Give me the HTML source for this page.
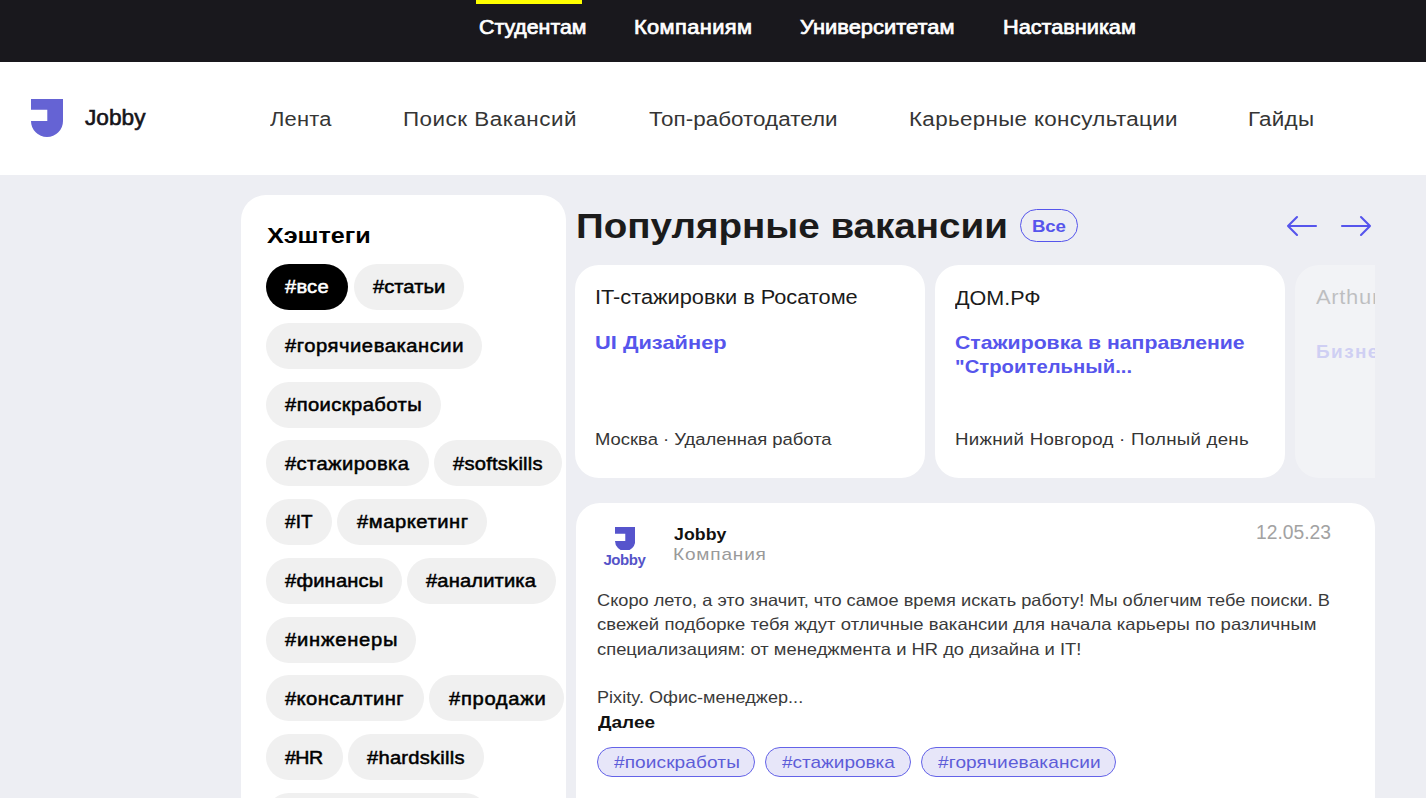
<!DOCTYPE html>
<html><head><meta charset='utf-8'><style>
html,body{margin:0;padding:0}
body{width:1426px;height:798px;overflow:hidden;position:relative;background:#edeef3;font-family:"Liberation Sans",sans-serif}
.a{position:absolute}
.t{position:absolute;white-space:nowrap;transform-origin:0 0}
.pill{position:absolute;height:46px;border-radius:23px;background:#f0f0f0}
.card{position:absolute;background:#fff;border-radius:24px}
</style></head><body>
<div class='a' style='left:0;top:0;width:1426px;height:62px;background:#19181d'></div>
<div class='a' style='left:476px;top:0;width:106px;height:4px;background:#ffff00'></div>
<div class='a' style='left:0;top:62px;width:1426px;height:113px;background:#fff'></div>
<svg class='a' style='left:31.4px;top:98.9px' width='32' height='38' viewBox='0 0 32 38'><path d='M0 0H32V22A16 16 0 0 1 0 22H16.3V10.7H0Z' fill='#6563d4'/></svg>
<div class='card' style='left:241px;top:195px;width:325px;height:700px;border-radius:25px'></div>
<div class='a' style='left:1020px;top:209px;width:56px;height:31px;border:1px solid #5655ec;border-radius:17px'></div>
<svg class='a' style='left:1285px;top:215px' width='34' height='22' viewBox='0 0 34 22'><path d='M31 11H3M12 2L3 11L12 20' fill='none' stroke='#5655ec' stroke-width='2.1' stroke-linecap='round' stroke-linejoin='round'/></svg>
<svg class='a' style='left:1339px;top:215px' width='34' height='22' viewBox='0 0 34 22'><path d='M3 11H31M22 2L31 11L22 20' fill='none' stroke='#5655ec' stroke-width='2.1' stroke-linecap='round' stroke-linejoin='round'/></svg>
<div class='card' style='left:575px;top:265px;width:350px;height:213px'></div>
<div class='card' style='left:935px;top:265px;width:350px;height:213px'></div>
<div class='a' style='left:1295px;top:265px;width:80px;height:213px;overflow:hidden'>
 <div class='card' style='left:0;top:0;width:350px;height:213px;opacity:.3'></div>
 <div class='t' style='left:20.5px;top:22.100000000000023px;font-size:20px;line-height:20px;letter-spacing:0.6px;transform:scaleX(1.1);color:#1b1b1b;opacity:.24'>Arthur Consulting</div>
 <div class='t' style='left:21px;top:76.69999999999999px;font-size:19px;font-weight:700;line-height:19px;letter-spacing:1.4px;color:#5655ec;opacity:.22'>Бизнес-аналитик</div>
</div>
<div class='card' style='left:576px;top:503px;width:799px;height:400px'></div>
<svg class='a' style='left:614.8px;top:526.8px' width='20.2' height='22.8' viewBox='0 0 32 36'><path d='M0 0H32V22A16 16 0 0 1 0 22H16.3V10.7H0Z' fill='#5654cc'/></svg>
<div class='a' style='left:266px;top:793px;width:222px;height:46px;border-radius:23px;background:#f0f0f0'></div>

<div class='t' style='left:479.00px;top:18.20px;font-size:19.5px;font-weight:400;letter-spacing:0.0px;line-height:19.5px;color:#fff;transform:scaleX(1.0928);-webkit-text-stroke:0.7px #fff;'>Студентам</div>
<div class='t' style='left:634.00px;top:18.20px;font-size:19.5px;font-weight:400;letter-spacing:0.335px;line-height:19.5px;color:#fff;transform:scaleX(1.12);-webkit-text-stroke:0.7px #fff;'>Компаниям</div>
<div class='t' style='left:799.50px;top:18.20px;font-size:19.5px;font-weight:400;letter-spacing:0.03px;line-height:19.5px;color:#fff;transform:scaleX(1.12);-webkit-text-stroke:0.7px #fff;'>Университетам</div>
<div class='t' style='left:1002.70px;top:18.20px;font-size:19.5px;font-weight:400;letter-spacing:-0.009px;line-height:19.5px;color:#fff;transform:scaleX(1.1127);-webkit-text-stroke:0.7px #fff;'>Наставникам</div>
<div class='t' style='left:84.90px;top:107.20px;font-size:22px;font-weight:400;letter-spacing:0.024px;line-height:22px;color:#16151a;transform:scaleX(1.0288);-webkit-text-stroke:0.6px #16151a;'>Jobby</div>
<div class='t' style='left:269.50px;top:109.00px;font-size:20px;font-weight:400;letter-spacing:0.207px;line-height:20px;color:#353535;transform:scaleX(1.0946);-webkit-text-stroke:0px #353535;'>Лента</div>
<div class='t' style='left:403.40px;top:109.00px;font-size:20px;font-weight:400;letter-spacing:0.439px;line-height:20px;color:#353535;transform:scaleX(1.12);-webkit-text-stroke:0px #353535;'>Поиск Вакансий</div>
<div class='t' style='left:649.30px;top:109.00px;font-size:20px;font-weight:400;letter-spacing:0.042px;line-height:20px;color:#353535;transform:scaleX(1.1192);-webkit-text-stroke:0px #353535;'>Топ-работодатели</div>
<div class='t' style='left:908.60px;top:109.00px;font-size:20px;font-weight:400;letter-spacing:0.285px;line-height:20px;color:#353535;transform:scaleX(1.12);-webkit-text-stroke:0px #353535;'>Карьерные консультации</div>
<div class='t' style='left:1248.00px;top:109.00px;font-size:20px;font-weight:400;letter-spacing:0.223px;line-height:20px;color:#353535;transform:scaleX(1.12);-webkit-text-stroke:0px #353535;'>Гайды</div>
<div class='t' style='left:266.80px;top:225.20px;font-size:21.7px;font-weight:700;letter-spacing:-0.057px;line-height:21.7px;color:#000;transform:scaleX(1.1614);-webkit-text-stroke:0px #000;'>Хэштеги</div>
<div class='pill' style='left:266px;top:264.00px;width:81.8px;background:#000'></div>
<div class='t' style='left:285.20px;top:278.30px;font-size:18px;font-weight:400;letter-spacing:0.18px;line-height:18px;color:#fff;transform:scaleX(1.12);-webkit-text-stroke:0.5px #fff;'>#все</div>
<div class='pill' style='left:353.5px;top:264.00px;width:110.3px;background:#f0f0f0'></div>
<div class='t' style='left:372.70px;top:278.30px;font-size:18px;font-weight:400;letter-spacing:0.014px;line-height:18px;color:#000;transform:scaleX(1.12);-webkit-text-stroke:0.5px #000;'>#статьи</div>
<div class='pill' style='left:266px;top:322.78px;width:215.7px;background:#f0f0f0'></div>
<div class='t' style='left:285.20px;top:337.08px;font-size:18px;font-weight:400;letter-spacing:0.494px;line-height:18px;color:#000;transform:scaleX(1.12);-webkit-text-stroke:0.5px #000;'>#горячиевакансии</div>
<div class='pill' style='left:266px;top:381.56px;width:174.5px;background:#f0f0f0'></div>
<div class='t' style='left:285.20px;top:395.86px;font-size:18px;font-weight:400;letter-spacing:0.382px;line-height:18px;color:#000;transform:scaleX(1.12);-webkit-text-stroke:0.5px #000;'>#поискработы</div>
<div class='pill' style='left:266px;top:440.34px;width:162.6px;background:#f0f0f0'></div>
<div class='t' style='left:285.20px;top:454.64px;font-size:18px;font-weight:400;letter-spacing:0.357px;line-height:18px;color:#000;transform:scaleX(1.12);-webkit-text-stroke:0.5px #000;'>#стажировка</div>
<div class='pill' style='left:434px;top:440.34px;width:128.0px;background:#f0f0f0'></div>
<div class='t' style='left:453.20px;top:454.64px;font-size:18px;font-weight:400;letter-spacing:0.196px;line-height:18px;color:#000;transform:scaleX(1.12);-webkit-text-stroke:0.5px #000;'>#softskills</div>
<div class='pill' style='left:266px;top:499.12px;width:66.0px;background:#f0f0f0'></div>
<div class='t' style='left:285.20px;top:513.42px;font-size:18px;font-weight:400;letter-spacing:0.095px;line-height:18px;color:#000;transform:scaleX(1.0538);-webkit-text-stroke:0.5px #000;'>#IT</div>
<div class='pill' style='left:337.4px;top:499.12px;width:149.6px;background:#f0f0f0'></div>
<div class='t' style='left:356.60px;top:513.42px;font-size:18px;font-weight:400;letter-spacing:0.496px;line-height:18px;color:#000;transform:scaleX(1.12);-webkit-text-stroke:0.5px #000;'>#маркетинг</div>
<div class='pill' style='left:266px;top:557.90px;width:136.0px;background:#f0f0f0'></div>
<div class='t' style='left:285.20px;top:572.20px;font-size:18px;font-weight:400;letter-spacing:0.153px;line-height:18px;color:#000;transform:scaleX(1.12);-webkit-text-stroke:0.5px #000;'>#финансы</div>
<div class='pill' style='left:407px;top:557.90px;width:149.0px;background:#f0f0f0'></div>
<div class='t' style='left:426.20px;top:572.20px;font-size:18px;font-weight:400;letter-spacing:0.119px;line-height:18px;color:#000;transform:scaleX(1.12);-webkit-text-stroke:0.5px #000;'>#аналитика</div>
<div class='pill' style='left:266px;top:616.68px;width:150.0px;background:#f0f0f0'></div>
<div class='t' style='left:285.20px;top:630.98px;font-size:18px;font-weight:400;letter-spacing:0.692px;line-height:18px;color:#000;transform:scaleX(1.12);-webkit-text-stroke:0.5px #000;'>#инженеры</div>
<div class='pill' style='left:266px;top:675.46px;width:157.6px;background:#f0f0f0'></div>
<div class='t' style='left:285.20px;top:689.76px;font-size:18px;font-weight:400;letter-spacing:0.357px;line-height:18px;color:#000;transform:scaleX(1.12);-webkit-text-stroke:0.5px #000;'>#консалтинг</div>
<div class='pill' style='left:429.4px;top:675.46px;width:134.2px;background:#f0f0f0'></div>
<div class='t' style='left:448.60px;top:689.76px;font-size:18px;font-weight:400;letter-spacing:0.613px;line-height:18px;color:#000;transform:scaleX(1.12);-webkit-text-stroke:0.5px #000;'>#продажи</div>
<div class='pill' style='left:266px;top:734.24px;width:76.6px;background:#f0f0f0'></div>
<div class='t' style='left:285.20px;top:748.54px;font-size:18px;font-weight:400;letter-spacing:-0.461px;line-height:18px;color:#000;transform:scaleX(1.0857);-webkit-text-stroke:0.5px #000;'>#HR</div>
<div class='pill' style='left:348px;top:734.24px;width:135.7px;background:#f0f0f0'></div>
<div class='t' style='left:367.20px;top:748.54px;font-size:18px;font-weight:400;letter-spacing:0.206px;line-height:18px;color:#000;transform:scaleX(1.12);-webkit-text-stroke:0.5px #000;'>#hardskills</div>
<div class='t' style='left:575.70px;top:209.20px;font-size:34.3px;font-weight:700;letter-spacing:-0.005px;line-height:34.3px;color:#1b1b1b;transform:scaleX(1.1245);-webkit-text-stroke:0px #1b1b1b;'>Популярные вакансии</div>
<div class='t' style='left:1031.60px;top:218.10px;font-size:17px;font-weight:700;letter-spacing:-0.138px;line-height:17px;color:#5655ec;transform:scaleX(1.0967);-webkit-text-stroke:0px #5655ec;'>Все</div>
<div class='t' style='left:594.60px;top:287.20px;font-size:20px;font-weight:400;letter-spacing:-0.016px;line-height:20px;color:#1b1b1b;transform:scaleX(1.0887);-webkit-text-stroke:0px #1b1b1b;'>IT-стажировки в Росатоме</div>
<div class='t' style='left:595.30px;top:333.00px;font-size:19px;font-weight:700;letter-spacing:0.009px;line-height:19px;color:#5655ec;transform:scaleX(1.1478);-webkit-text-stroke:0px #5655ec;'>UI Дизайнер</div>
<div class='t' style='left:595.00px;top:432.20px;font-size:16.7px;font-weight:400;letter-spacing:-0.004px;line-height:16.7px;color:#353535;transform:scaleX(1.1047);-webkit-text-stroke:0px #353535;'>Москва · Удаленная работа</div>
<div class='t' style='left:955.30px;top:287.50px;font-size:20px;font-weight:400;letter-spacing:0.0px;line-height:20px;color:#1b1b1b;transform:scaleX(1.0759);-webkit-text-stroke:0px #1b1b1b;'>ДОМ.РФ</div>
<div class='t' style='left:955.20px;top:332.60px;font-size:19px;font-weight:700;letter-spacing:-0.009px;line-height:19px;color:#5655ec;transform:scaleX(1.1186);-webkit-text-stroke:0px #5655ec;'>Стажировка в направление</div>
<div class='t' style='left:955.00px;top:356.60px;font-size:19px;font-weight:700;letter-spacing:0.024px;line-height:19px;color:#5655ec;transform:scaleX(1.0659);-webkit-text-stroke:0px #5655ec;'>"Строительный...</div>
<div class='t' style='left:954.70px;top:432.20px;font-size:16.7px;font-weight:400;letter-spacing:0.232px;line-height:16.7px;color:#353535;transform:scaleX(1.12);-webkit-text-stroke:0px #353535;'>Нижний Новгород · Полный день</div>
<div class='t' style='left:603.40px;top:551.70px;font-size:15px;font-weight:700;letter-spacing:-0.425px;line-height:15px;color:#5553c8;transform:scaleX(1.0);-webkit-text-stroke:0px #5553c8;'>Jobby</div>
<div class='t' style='left:673.60px;top:525.90px;font-size:17px;font-weight:700;letter-spacing:0.072px;line-height:17px;color:#111;transform:scaleX(1.042);-webkit-text-stroke:0px #111;'>Jobby</div>
<div class='t' style='left:673.40px;top:546.00px;font-size:17px;font-weight:400;letter-spacing:0.74px;line-height:17px;color:#9a9a9a;transform:scaleX(1.12);-webkit-text-stroke:0px #9a9a9a;'>Компания</div>
<div class='t' style='left:1256.40px;top:521.90px;font-size:20.5px;font-weight:400;letter-spacing:-0.014px;line-height:20.5px;color:#a2a2a2;transform:scaleX(0.9397);-webkit-text-stroke:0px #a2a2a2;'>12.05.23</div>
<div class='t' style='left:597.00px;top:592.00px;font-size:16.5px;font-weight:400;letter-spacing:0.005px;line-height:16.5px;color:#3a3a3a;transform:scaleX(1.1023);-webkit-text-stroke:0px #3a3a3a;'>Скоро лето, а это значит, что самое время искать работу! Мы облегчим тебе поиски. В</div>
<div class='t' style='left:597.00px;top:616.40px;font-size:16.5px;font-weight:400;letter-spacing:0.054px;line-height:16.5px;color:#3a3a3a;transform:scaleX(1.12);-webkit-text-stroke:0px #3a3a3a;'>свежей подборке тебя ждут отличные вакансии для начала карьеры по различным</div>
<div class='t' style='left:597.00px;top:640.80px;font-size:16.5px;font-weight:400;letter-spacing:0.009px;line-height:16.5px;color:#3a3a3a;transform:scaleX(1.112);-webkit-text-stroke:0px #3a3a3a;'>специализациям: от менеджмента и HR до дизайна и IT!</div>
<div class='t' style='left:597.00px;top:689.30px;font-size:16.5px;font-weight:400;letter-spacing:0.02px;line-height:16.5px;color:#3a3a3a;transform:scaleX(1.0941);-webkit-text-stroke:0px #3a3a3a;'>Pixity. Офис-менеджер...</div>
<div class='t' style='left:598.00px;top:713.90px;font-size:17px;font-weight:700;letter-spacing:0.0px;line-height:17px;color:#111;transform:scaleX(1.1176);-webkit-text-stroke:0px #111;'>Далее</div>
<div class='a' style='left:597px;top:746.7px;width:155.8px;height:28px;border:1px solid #6463e8;border-radius:15px;background:#e7e6f9'></div>
<div class='t' style='left:613.80px;top:753.60px;font-size:17px;font-weight:400;letter-spacing:0.096px;line-height:17px;color:#5d5cd8;transform:scaleX(1.12);-webkit-text-stroke:0px #5d5cd8;'>#поискработы</div>
<div class='a' style='left:765.3px;top:746.7px;width:143.7px;height:28px;border:1px solid #6463e8;border-radius:15px;background:#e7e6f9'></div>
<div class='t' style='left:781.80px;top:753.60px;font-size:17px;font-weight:400;letter-spacing:0.009px;line-height:17px;color:#5d5cd8;transform:scaleX(1.1158);-webkit-text-stroke:0px #5d5cd8;'>#стажировка</div>
<div class='a' style='left:921.3px;top:746.7px;width:193.0px;height:28px;border:1px solid #6463e8;border-radius:15px;background:#e7e6f9'></div>
<div class='t' style='left:937.80px;top:753.60px;font-size:17px;font-weight:400;letter-spacing:0.119px;line-height:17px;color:#5d5cd8;transform:scaleX(1.12);-webkit-text-stroke:0px #5d5cd8;'>#горячиевакансии</div>
</body></html>
